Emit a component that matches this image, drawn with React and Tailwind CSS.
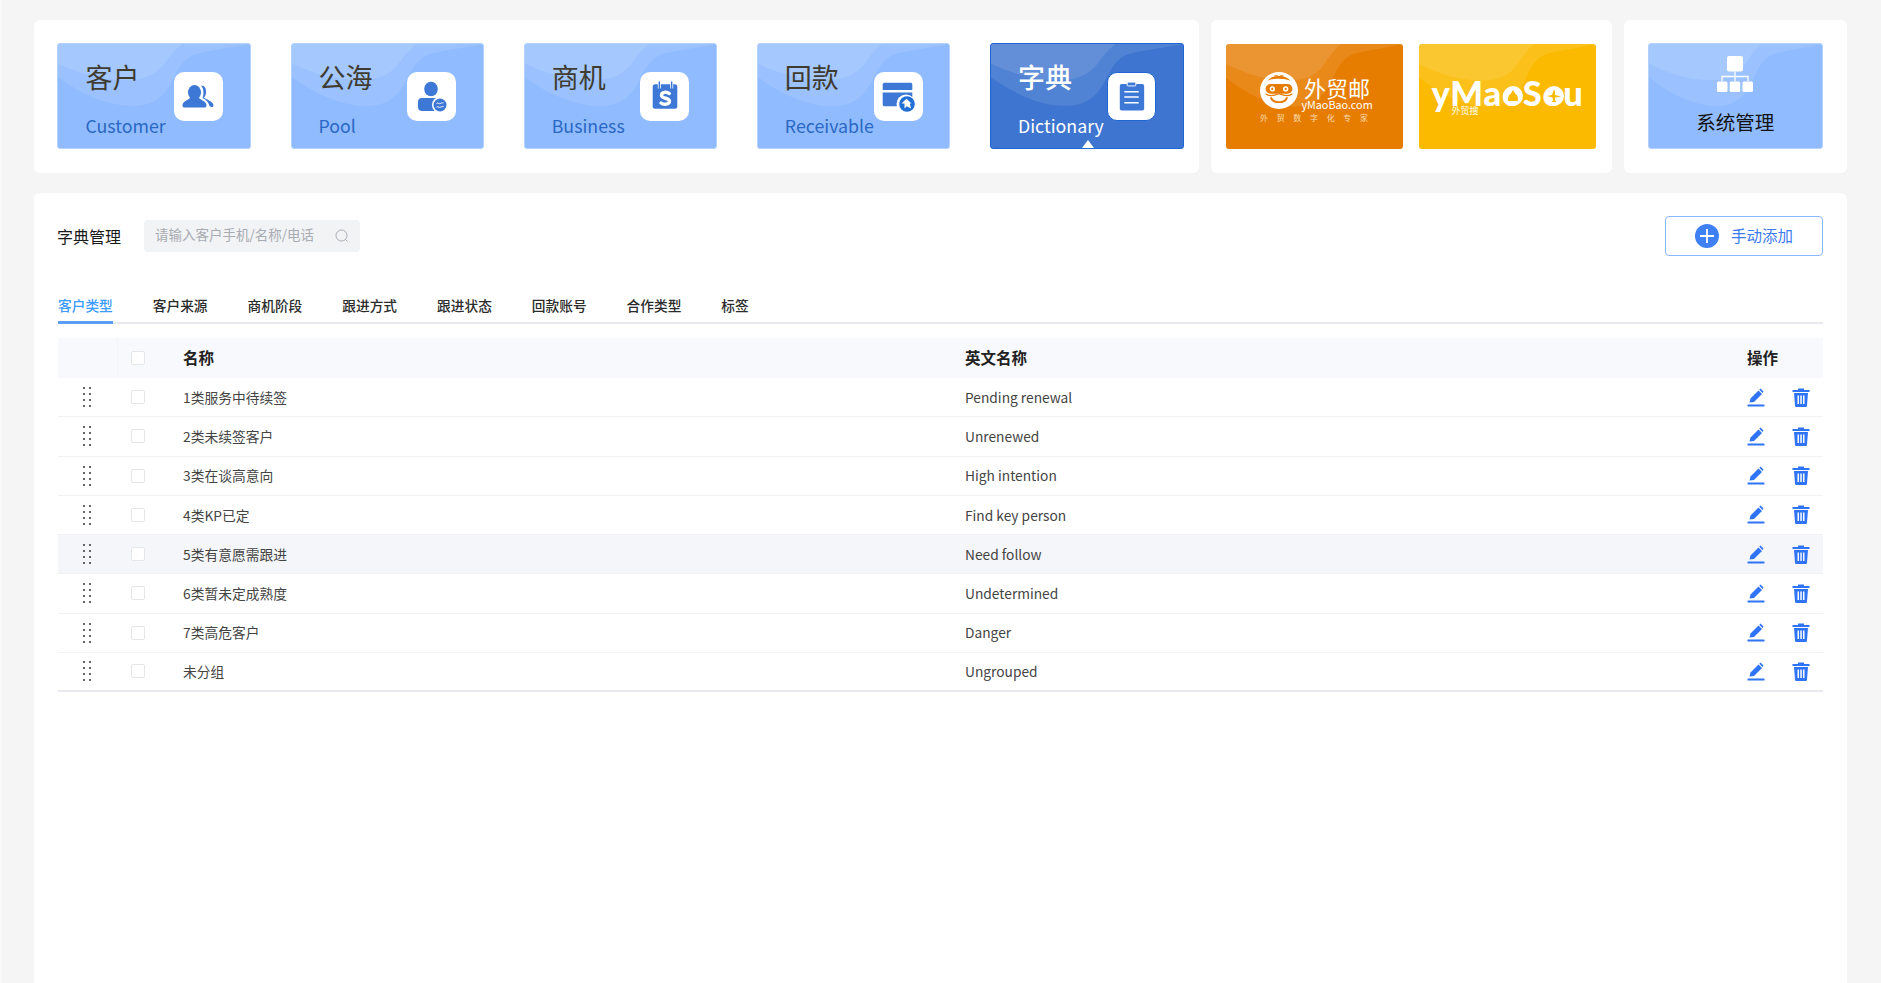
import React from "react";

const font = { fontFamily: '"Noto Sans CJK SC", "Noto Sans", sans-serif' };

const tabs = ["客户类型", "客户来源", "商机阶段", "跟进方式", "跟进状态", "回款账号", "合作类型", "标签"];

const rows = [
  { name: "1类服务中待续签", en: "Pending renewal" },
  { name: "2类未续签客户", en: "Unrenewed" },
  { name: "3类在谈高意向", en: "High intention" },
  { name: "4类KP已定", en: "Find key person" },
  { name: "5类有意愿需跟进", en: "Need follow", hover: true },
  { name: "6类暂未定成熟度", en: "Undetermined" },
  { name: "7类高危客户", en: "Danger" },
  { name: "未分组", en: "Ungrouped", last: true },
];

function Waves() {
  return (
    <svg className="absolute inset-0 w-full h-full" viewBox="0 0 194 106" preserveAspectRatio="none">
      <path d="M0 34C25 52 50 63 75 63C95 63 105 55 113 42C120 30 122 20 135 12C142 8 170 5 194 0L0 0Z" fill="#fff" fillOpacity=".1" />
      <path d="M0 20C20 30 45 37 68 37C85 37 100 32 108 20C112 14 118 6 126 0L0 0Z" fill="#fff" fillOpacity=".1" />
    </svg>
  );
}

function CustomerIcon() {
  return (
    <svg viewBox="0 0 49 49" className="w-full h-full" fill="#3d78d6">
      <ellipse cx="20.5" cy="20.5" rx="6.5" ry="7.5" />
      <path d="M8.5 33.5C8.5 29.5 13 28.5 16 26L25 26C28 28.5 32.5 29.5 32.5 33.5C32.5 35 31.5 35.5 30.5 35.5L10.5 35.5C9.5 35.5 8.5 35 8.5 33.5Z" />
      <path d="M27 13.5C31 13.5 32.5 17 32 21C31.7 23 31 24.5 30 25.5C33 28 39.5 29.5 39.5 33.5C39.5 35.5 37 35.5 35.5 34C34.5 30 31.5 27.5 28.5 26C30 22 30 17 27 13.5Z" />
    </svg>
  );
}

function PoolIcon() {
  return (
    <svg viewBox="0 0 49 49" className="w-full h-full">
      <ellipse cx="24" cy="17" rx="6.8" ry="7.3" fill="#3d78d6" />
      <rect x="11" y="26" width="22" height="13" rx="4" fill="#3d78d6" />
      <circle cx="33" cy="33" r="8" fill="#fff" />
      <circle cx="33" cy="33" r="6.5" fill="#3d78d6" />
      <path d="M29.5 31.5C31 30 32 32.5 33.5 31.5S35.5 31 36.5 30.8M29.5 35.2C31 33.7 32 36.2 33.5 35.2S35.5 34.7 36.5 34.5" stroke="#fff" strokeWidth="1" fill="none" />
    </svg>
  );
}

function BusinessIcon() {
  return (
    <svg viewBox="0 0 49 49" className="w-full h-full">
      <rect x="12.7" y="12.3" width="24.6" height="24.4" rx="2.5" fill="#3d78d6" />
      <path d="M19.3 10V16.5M31.7 10V16.5" stroke="#fff" strokeWidth="3" />
      <path d="M19.3 10V16.5M31.7 10V16.5" stroke="#3d78d6" strokeWidth="1.4" strokeLinecap="round" />
      <path d="M29.3 21.5C27 19.5 21.5 19.8 21.5 23.2C21.5 27 29.5 25.5 29.5 29.3C29.5 32.7 23.5 33 21 31" stroke="#fff" strokeWidth="3.4" fill="none" strokeLinecap="round" />
    </svg>
  );
}

function ReceivableIcon() {
  return (
    <svg viewBox="0 0 49 49" className="w-full h-full">
      <path d="M8.7 18V12.5C8.7 11.3 9.5 10.7 10.7 10.7H36.5C37.7 10.7 38.3 11.3 38.3 12.5V18Z" fill="#3d78d6" />
      <path d="M8.7 20.5H38.3V32.5C38.3 33.7 37.7 34.3 36.5 34.3H10.7C9.5 34.3 8.7 33.7 8.7 32.5Z" fill="#3d78d6" />
      <circle cx="32" cy="32" r="9.5" fill="#fff" />
      <circle cx="33" cy="32" r="7.8" fill="#1f6fd6" />
      <path d="M27.5 31.5L32.5 26.8L37.5 31.5H35.8L37 36.5L32.8 34.3L30.5 36.5V31.5Z" fill="#fff" />
    </svg>
  );
}

function DictionaryIcon() {
  return (
    <svg viewBox="0 0 49 49" className="w-full h-full">
      <rect x="12.3" y="11.5" width="25.4" height="27.5" rx="2" fill="#3d78d6" />
      <rect x="20" y="9.5" width="9" height="4" rx="1" fill="#3d78d6" stroke="#fff" strokeWidth="1" />
      <path d="M17 19.5H32M17 25H32M17 31H32" stroke="#fff" strokeWidth="1.7" />
    </svg>
  );
}

function NavCard({ title, sub, icon, active }) {
  return (
    <div className={"relative flex-none w-[193.6px] h-[106px] rounded-[3px] border overflow-hidden flex " + (active ? "bg-[#3e75d0] border-[#1e66d2]" : "bg-[#90bcff] border-[#b4d2ff]")}>
      <Waves />
      <div className="relative flex-1 min-w-0 pl-[27px] pt-[13px]">
        <div className={"text-[27px] leading-[40px] whitespace-nowrap " + (active ? "text-white font-medium" : "text-[#3f3b30]")}>{title}</div>
        <div className={"mt-[15px] text-[17.8px] leading-[27px] whitespace-nowrap " + (active ? "text-white" : "text-[#2a68c4]")}>{sub}</div>
      </div>
      <div className={"relative flex-none mt-[27.5px] mr-[26.8px] w-[49px] h-[49px] rounded-[10px] bg-white " + (active ? "border border-[#1e66d2]" : "")}>
        {icon}
      </div>
      {active && <div className="absolute bottom-0 left-[91px] w-0 h-0 border-x-[6px] border-x-transparent border-b-[8px] border-b-white" />}
    </div>
  );
}

function MonkeyLogo() {
  return (
    <svg viewBox="0 0 34 36" className="w-[38px] h-[39px] flex-none" preserveAspectRatio="none">
      <circle cx="17" cy="18" r="17" fill="#fff" />
      <path d="M7 9C10 3 24 3 27 9C23 6.5 11 6.5 7 9Z" fill="#e67c00" />
      <path d="M13 4.5h3M18 4.5h3" stroke="#e67c00" strokeWidth="1.2" />
      <rect x="5" y="12" width="24" height="9" rx="4.5" fill="#e67c00" />
      <circle cx="11" cy="16.5" r="2.4" fill="#fff" />
      <circle cx="23" cy="16.5" r="2.4" fill="#fff" />
      <circle cx="11" cy="16.5" r="1" fill="#e67c00" />
      <circle cx="23" cy="16.5" r="1" fill="#e67c00" />
      <path d="M10 25C12 30 22 30 24 25" stroke="#e67c00" strokeWidth="1.8" fill="none" strokeLinecap="round" />
      <path d="M5 21C8 24 12 23 17 21C22 23 26 24 29 21" stroke="#e67c00" strokeWidth="1" fill="none" />
    </svg>
  );
}

function OrangeCard() {
  return (
    <div className="relative flex-none w-[177px] h-[105px] rounded-[3px] bg-[#e67c00] overflow-hidden">
      <Waves />
      <div className="relative pl-[34px] pt-[27px]">
        <div className="flex gap-[6px]">
          <MonkeyLogo />
          <div className="w-[66px] flex flex-col items-center text-white pt-[6px]">
            <div className="text-[22px] leading-[20px] whitespace-nowrap">外贸邮</div>
            <div className="text-[10.8px] leading-[10px] mt-[2px] whitespace-nowrap">yMaoBao.com</div>
          </div>
        </div>
        <div className="w-[108px] flex justify-between text-[8px] leading-[10px] text-[#f8dcb4] mt-[3px]">
          {"外贸数字化专家".split("").map((c) => <span key={c}>{c}</span>)}
        </div>
      </div>
    </div>
  );
}

function BadgeO({ children }) {
  return (
    <span className="relative inline-block">
      o
      <svg viewBox="0 0 20 20" className="absolute left-[1px] bottom-[7px] w-[20px] h-[20px]">
        <circle cx="10" cy="10" r="10" fill="#fff" />
        {children}
      </svg>
    </span>
  );
}

function YellowCard() {
  return (
    <div className="relative flex-none w-[177px] h-[105px] rounded-[3px] bg-[#fbba00] overflow-hidden">
      <Waves />
      <div className="relative pt-[29px] flex justify-center">
        <div className="relative text-white font-black text-[34.5px] leading-[40px] tracking-[0.8px] whitespace-nowrap" style={{ fontFamily: "Lato, sans-serif" }}>
          yMa
          <BadgeO>
            <path d="M10 4L12.5 8C15 9 15.5 14 14.5 15H5.5C4.5 14 5 9 7.5 8Z" fill="#fbba00" />
          </BadgeO>
          S
          <BadgeO>
            <path d="M3 10L8 9L9.5 4.5H11L11 9L17 10.5L11 11.5L11 14.5L12.5 16H7.5L9 14.5L8.5 11.5Z" fill="#fbba00" />
          </BadgeO>
          u
          <span className="absolute left-[20px] top-[33px] text-[9px] leading-[10px] font-normal tracking-normal" style={font}>外贸搜</span>
        </div>
      </div>
    </div>
  );
}

function OrgIcon() {
  return (
    <svg viewBox="0 0 36 36" className="w-[36px] h-[36px]">
      <rect x="10" y="0" width="16" height="15.5" rx="2" fill="#fff" />
      <path d="M18 15.5V25M5 25V20.5H31V25" stroke="#fff" strokeWidth="1.3" fill="none" />
      <rect x="0" y="25.5" width="10.5" height="10.5" rx="1.5" fill="#fff" />
      <rect x="12.7" y="25.5" width="10.5" height="10.5" rx="1.5" fill="#fff" />
      <rect x="25.5" y="25.5" width="10.5" height="10.5" rx="1.5" fill="#fff" />
    </svg>
  );
}

function DragDots() {
  return (
    <div className="grid grid-cols-2 gap-x-[4px] gap-y-[4px] w-[8px]">
      {[0, 1, 2, 3, 4, 5, 6, 7].map((i) => <span key={i} className="w-[2px] h-[2px] bg-[#666]" />)}
    </div>
  );
}

function Checkbox() {
  return <span className="block w-[14px] h-[14px] ml-[12.5px] rounded-[2px] border border-[#e6e6e6] bg-white" />;
}

function EditIcon() {
  return (
    <svg viewBox="0 0 18 19" className="w-[18px] h-[19px]" fill="#2f74f6">
      <path d="M2.5 14.5L3.5 10.5L11.5 2.5L15 6L7 14Z" />
      <path d="M12.3 1.7L13.5 0.5L16.5 3.5L15.5 5Z" />
      <rect x="0.5" y="16.5" width="17" height="2" rx="0.5" />
    </svg>
  );
}

function TrashIcon() {
  return (
    <svg viewBox="0 0 18 19" className="w-[18px] h-[19px]" fill="#2f74f6">
      <path d="M6 0.5H12V2H17.5V4H0.5V2H6Z" />
      <path fillRule="evenodd" d="M2 5H16L15 17.5C14.9 18.5 14.5 19 13.5 19H4.5C3.5 19 3.1 18.5 3 17.5ZM5.5 7.5V16H7V7.5ZM8.3 7.5V16H9.8V7.5ZM11 7.5V16H12.5V7.5Z" />
    </svg>
  );
}

export default function App() {
  return (
    <div className="h-[983px] overflow-hidden bg-[#f5f5f5] border-l-[2px] border-[#fafafa] pl-[32px] pr-[34px] pt-[20px]" style={font}>
      <div className="flex gap-[12px] h-[153px]">
        <div className="w-[1165px] rounded-[6px] bg-white pl-[23.4px] pt-[23px] flex gap-[39.55px]">
          <NavCard title="客户" sub="Customer" icon={<CustomerIcon />} />
          <NavCard title="公海" sub="Pool" icon={<PoolIcon />} />
          <NavCard title="商机" sub="Business" icon={<BusinessIcon />} />
          <NavCard title="回款" sub="Receivable" icon={<ReceivableIcon />} />
          <NavCard title="字典" sub="Dictionary" icon={<DictionaryIcon />} active />
        </div>
        <div className="w-[401px] rounded-[6px] bg-white pl-[15px] pt-[24px] flex gap-[16px]">
          <OrangeCard />
          <YellowCard />
        </div>
        <div className="w-[223px] rounded-[6px] bg-white pl-[23.5px] pt-[23px]">
          <div className="relative w-[175.5px] h-[106px] rounded-[3px] border border-[#b4d2ff] bg-[#90bcff] overflow-hidden">
            <Waves />
            <div className="relative flex flex-col items-center pt-[12px]">
              <OrgIcon />
              <div className="mt-[15px] text-[19.5px] leading-[30px] text-[#111]">系统管理</div>
            </div>
          </div>
        </div>
      </div>

      <div className="mt-[20px] w-[1813px] h-[800px] rounded-t-[6px] bg-white px-[24px] pt-[23px]">
        <div className="flex items-center justify-between h-[40px]">
          <div className="flex items-center">
            <div className="w-[86px] text-[16px] text-[#1a1a1a] -ml-[1px]">字典管理</div>
            <div className="flex items-center justify-between w-[216px] h-[32px] ml-[1px] rounded-[4px] bg-[#f2f3f5] pl-[11px] pr-[11px]">
              <span className="text-[13.5px] text-[#a8abb2] pb-[4px]">请输入客户手机/名称/电话</span>
              <svg viewBox="0 0 14 14" className="w-[14px] h-[14px]" fill="none" stroke="#a8abb2" strokeWidth="1">
                <circle cx="6.5" cy="6.5" r="5.5" />
                <path d="M10.5 10.5L12.5 12.5" />
              </svg>
            </div>
          </div>
          <button className="flex items-center w-[158px] h-[40px] pl-[29px] rounded-[4px] border border-[#8ab8ff] bg-white">
            <svg viewBox="0 0 24 24" className="w-[24px] h-[24px]">
              <circle cx="12" cy="12" r="12" fill="#4080f5" />
              <path d="M12 5V19M5 12H19" stroke="#fff" strokeWidth="1.8" />
            </svg>
            <span className="ml-[12px] text-[15.5px] text-[#3d7bf0]">手动添加</span>
          </button>
        </div>

        <div className="mt-[27px] flex gap-[40px] h-[41px] border-b-2 border-[#e9e9f0]">
          {tabs.map((t, i) => (
            <div key={t} className={"h-[41px] pt-[12px] text-[13.7px] leading-[20px] font-medium whitespace-nowrap " + (i === 0 ? "text-[#3b9bff] border-b-[3px] border-[#5a9ef8]" : "text-[#2b2b2b]")}>
              {t}
            </div>
          ))}
        </div>

        <div className="mt-[14px]">
          <div className="grid grid-cols-[60px_65px_782px_782px_1fr] items-center h-[40px] bg-[#f8f9fc] text-[15.5px] font-bold text-[#222]">
            <div className="h-full border-r border-[#f4f5f9]" />
            <div><Checkbox /></div>
            <div>名称</div>
            <div>英文名称</div>
            <div>操作</div>
          </div>
          {rows.map((r) => (
            <div
              key={r.name}
              className={"grid grid-cols-[60px_65px_782px_782px_1fr] items-center h-[39.25px] text-[13.75px] text-[#444] " + (r.hover ? "bg-[#f5f6fa] " : "") + (r.last ? "border-b-2 border-[#e9e9f0]" : "border-b border-[#f2f2f5]")}
            >
              <div className="flex justify-center pr-[2px]"><DragDots /></div>
              <div><Checkbox /></div>
              <div>{r.name}</div>
              <div>{r.en}</div>
              <div className="flex gap-[27px]">
                <EditIcon />
                <TrashIcon />
              </div>
            </div>
          ))}
        </div>
      </div>
    </div>
  );
}
